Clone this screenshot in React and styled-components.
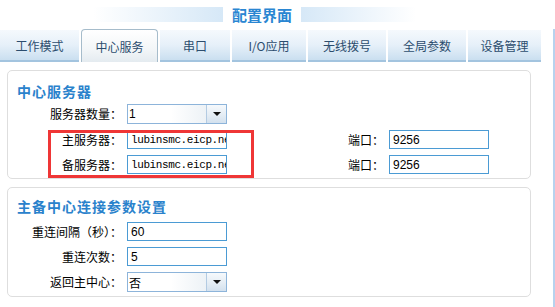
import React from 'react';
import styled, { createGlobalStyle } from 'styled-components';

const GlobalStyle = createGlobalStyle`
  html, body {
    margin: 0;
    padding: 0;
    background: #fff;
    font-family: "Noto Sans CJK SC", "Liberation Sans", sans-serif;
    font-size: 12px;
  }
`;

const Page = styled.div`
  width: 555px;
  height: 307px;
  overflow: hidden;
`;

const Header = styled.div`
  height: 29px;
  display: flex;
  align-items: center;
  padding-left: 93px;
`;

const Band = styled.div`
  width: ${(p) => p.$w}px;
  height: 15px;
  background: ${(p) => (p.$fade === 'left'
    ? 'linear-gradient(to right, rgba(214,232,247,0) 0%, #d6e8f7 100%)'
    : 'linear-gradient(to right, #d6e8f7 0%, rgba(214,232,247,0) 100%)')};
`;

const Title = styled.div`
  margin: 0 9px;
  font-size: 15px;
  font-weight: bold;
  line-height: 17px;
  color: #2a86d2;
`;

const Frame = styled.div`
  border-right: 2px solid #b7d2ee;
  height: 278px;
  box-sizing: border-box;
`;

const TabBar = styled.div`
  display: flex;
  align-items: flex-end;
  gap: 2px;
  height: 33px;
`;

const Tab = styled.div`
  width: ${(p) => p.$w}px;
  box-sizing: border-box;
  display: flex;
  align-items: center;
  justify-content: center;
  color: #2c4d6e;
  font-size: 12px;
  ${(p) => (p.$active
    ? `
    height: 33px;
    border: 1px solid #a6bccb;
    border-bottom: none;
    border-radius: 4px 4px 0 0;
    background: linear-gradient(#ffffff 0%, #f3f6f8 60%, #e4ebf0 100%);
    padding-top: 1px;
  `
    : `
    height: 32px;
    border-bottom: 2px solid #a3c4df;
    background: linear-gradient(#f5f9fd 0%, #e6f0f9 50%, #cadff0 100%);
  `)}
`;

const Body = styled.div`
  padding: 8px 0 0 7px;
  display: flex;
  flex-direction: column;
  gap: 8px;
`;

const Fieldset = styled.div`
  position: relative;
  width: 524px;
  box-sizing: border-box;
  border: 1px solid #dedede;
  border-radius: 5px;
  padding: ${(p) => p.$pad};
  display: flex;
  flex-direction: column;
  gap: 6px;
`;

const Legend = styled.div`
  font-size: 14px;
  font-weight: bold;
  letter-spacing: 1px;
  line-height: 16px;
  color: #2a82cc;
  margin-bottom: ${(p) => p.$gap}px;
`;

const Row = styled.div`
  display: flex;
  align-items: center;
`;

const Label = styled.div`
  width: ${(p) => p.$w}px;
  text-align: right;
  color: #000;
  font-size: 12px;
  line-height: 14px;
  white-space: nowrap;
  margin-right: 5px;
`;

const Input = styled.div`
  width: 100px;
  height: 19px;
  box-sizing: border-box;
  border: 1px solid #4b9bd4;
  background: #fff;
  padding-left: 3px;
  display: flex;
  align-items: center;
  overflow: hidden;
  white-space: nowrap;
  font-family: ${(p) => (p.$mono ? '"Liberation Mono", monospace' : '"Liberation Sans", sans-serif')};
  font-size: ${(p) => (p.$mono ? '11px' : '12px')};
  letter-spacing: ${(p) => (p.$mono ? '-0.4px' : '0')};
  color: #000;
`;

const Select = styled.div`
  width: 100px;
  height: 20px;
  box-sizing: border-box;
  border: 1px solid #8db4da;
  display: flex;
`;

const SelectValue = styled.div`
  flex: 1;
  padding-left: 1px;
  display: flex;
  align-items: center;
  background: linear-gradient(to right, #ffffff 0%, #ffffff 55%, #edf2f6 100%);
  font-family: "Liberation Sans", "Noto Sans CJK SC", sans-serif;
  font-size: 12px;
  color: #000;
`;

const SelectButton = styled.div`
  width: 19px;
  border-left: 1px solid #b3cbe2;
  background: linear-gradient(#f6f9fc 0%, #e3ecf4 60%, #d3e1ee 100%);
  display: flex;
  align-items: center;
  justify-content: center;

  &::after {
    content: '';
    border-left: 4px solid transparent;
    border-right: 4px solid transparent;
    border-top: 4px solid #111;
  }
`;

const Highlight = styled.div`
  position: absolute;
  left: 40px;
  top: 59px;
  width: 206px;
  height: 48px;
  box-sizing: border-box;
  border: 3px solid #ef3636;
  pointer-events: none;
`;

const tabs = [
  { name: '工作模式', w: 79 },
  { name: '中心服务', w: 77, active: true },
  { name: '串口', w: 70 },
  { name: 'I/O应用', w: 74 },
  { name: '无线拨号', w: 78 },
  { name: '全局参数', w: 78 },
  { name: '设备管理', w: 73 },
];

function Dropdown({ value }) {
  return (
    <Select>
      <SelectValue>{value}</SelectValue>
      <SelectButton />
    </Select>
  );
}

export default function App() {
  return (
    <Page>
      <GlobalStyle />
      <Header>
        <Band $w={130} $fade="left" />
        <Title>配置界面</Title>
        <Band $w={115} $fade="right" />
      </Header>
      <Frame>
        <TabBar>
          {tabs.map((t) => (
            <Tab key={t.name} $w={t.w} $active={t.active}>{t.name}</Tab>
          ))}
        </TabBar>
        <Body>
          <Fieldset $pad="12px 0 4px 9px">
            <Legend $gap={-1}>中心服务器</Legend>
            <Row>
              <Label $w={105}>服务器数量：</Label>
              <Dropdown value="1" />
            </Row>
            <Row>
              <Label $w={105}>主服务器：</Label>
              <Input $mono>lubinsmc.eicp.net</Input>
              <Label $w={157}>端口：</Label>
              <Input>9256</Input>
            </Row>
            <Row>
              <Label $w={105}>备服务器：</Label>
              <Input $mono>lubinsmc.eicp.net</Input>
              <Label $w={157}>端口：</Label>
              <Input>9256</Input>
            </Row>
            <Highlight />
          </Fieldset>
          <Fieldset $pad="10px 0 4px 9px">
            <Legend $gap={2}>主备中心连接参数设置</Legend>
            <Row>
              <Label $w={105}>重连间隔（秒）：</Label>
              <Input>60</Input>
            </Row>
            <Row>
              <Label $w={105}>重连次数：</Label>
              <Input>5</Input>
            </Row>
            <Row>
              <Label $w={105}>返回主中心：</Label>
              <Dropdown value="否" />
            </Row>
          </Fieldset>
        </Body>
      </Frame>
    </Page>
  );
}
